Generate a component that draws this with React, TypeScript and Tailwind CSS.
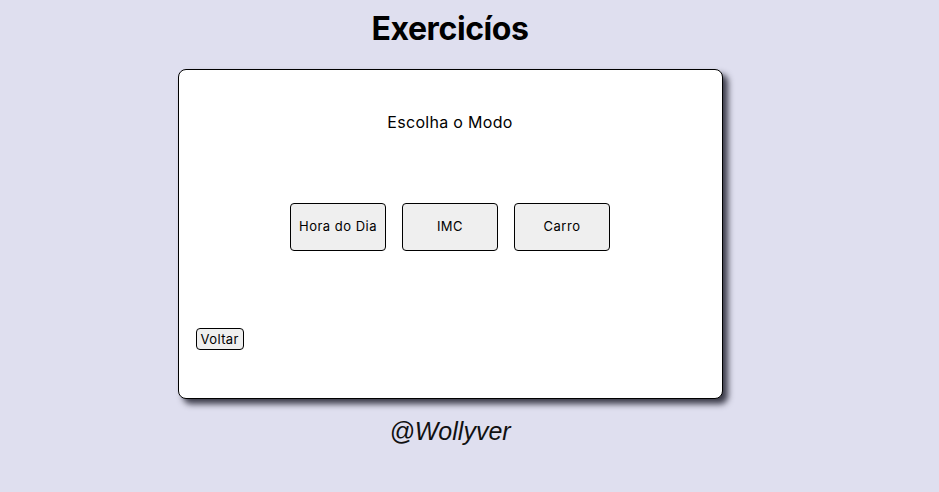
import React from 'react'

const font = { fontFamily: 'Inter, "Noto Sans", sans-serif' }

function ModeButton({ label }: { label: string }) {
  return (
    <button className="w-[96px] h-[48px] rounded-[4px] border border-black bg-[#efefef] text-[13px] tracking-[0.5px] text-black">
      {label}
    </button>
  )
}

export default function App() {
  return (
    <div className="min-h-[492px] w-full bg-[#dfdfef]" style={font}>
      <div className="w-[900px] flex flex-col items-center pt-[5px]">
        <h1 className="text-[32px] leading-[48px] font-bold tracking-[-0.4px] text-black mb-[16px]">Exercicíos</h1>

        <div className="w-[545px] h-[330px] rounded-[8px] border border-black bg-white shadow-[5px_5px_6px_#3a3a48] flex flex-col">
          <p className="text-center text-[16px] leading-[24px] tracking-[0.3px] text-black pt-[40px]">Escolha o Modo</p>

          <div className="flex justify-center gap-[16px] mt-[69px]">
            <ModeButton label="Hora do Dia" />
            <ModeButton label="IMC" />
            <ModeButton label="Carro" />
          </div>

          <div className="pl-[17px] mt-[75px]">
            <button className="rounded-[4px] border border-black bg-[#efefef] text-[13px] leading-[20px] tracking-[0.4px] px-[4px] text-black">
              Voltar
            </button>
          </div>
        </div>

        <p
          className="mt-[14px] text-[25px] leading-[36px] italic font-light text-[#111]"
          style={{ fontFamily: '"Liberation Sans", Arial, sans-serif' }}
        >
          @Wollyver
        </p>
      </div>
    </div>
  )
}
